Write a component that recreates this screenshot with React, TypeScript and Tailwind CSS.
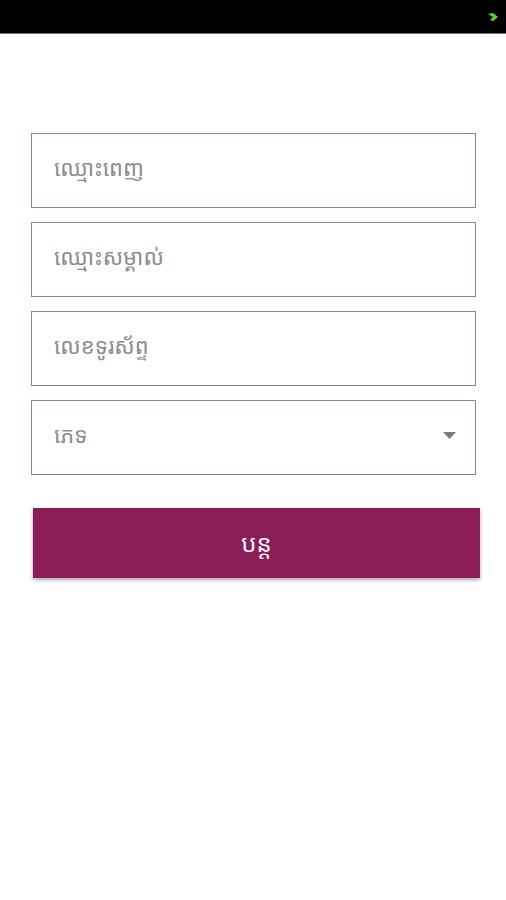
import React from 'react';

const fields = ['ឈ្មោះពេញ', 'ឈ្មោះសម្គាល់', 'លេខទូរស័ព្ទ'];

function Field({ label, select }: { label: string; select?: boolean }) {
  return (
    <div className="h-[75px] border border-[#a87a8e] border-b-[#8e7f86] bg-white flex items-center pl-[22px] pr-[19px] pb-[6px]">
      <span className="flex-1 text-[22px] text-[#8c8c8c]">{label}</span>
      {select && (
        <svg width="13" height="7" viewBox="0 0 13 7" className="mt-[2px]">
          <path d="M0 0 H13 L6.5 7 Z" fill="#7a7a7a" />
        </svg>
      )}
    </div>
  );
}

export default function App() {
  return (
    <div
      className="w-[506px] h-[900px] bg-white flex flex-col"
      style={{ fontFamily: '"Noto Sans Khmer", "Khmer OS", "Noto Sans", "DejaVu Sans", sans-serif' }}
    >
      {/* status bar */}
      <div className="h-[34px] bg-black flex items-center justify-end pr-[8px] border-b border-[#777]">
        <svg width="10" height="8" viewBox="0 0 10 8">
          <path d="M0 1 L5 0 L10 4 L5 8 L2 7 L5 4 Z" fill="#5fd12c" />
        </svg>
      </div>

      <div className="flex flex-col gap-[14px] pl-[31px] pr-[30px] pt-[99px]">
        {fields.map((f) => (
          <Field key={f} label={f} />
        ))}
        <Field label="ភេទ" select />
      </div>

      <div className="pl-[33px] pr-[26px] pt-[33px]">
        <button className="w-full h-[70px] bg-[#8c1c55] text-white text-[24px] shadow-[0_2px_4px_rgba(0,0,0,0.35)] flex items-center justify-center">
          បន្ត
        </button>
      </div>
    </div>
  );
}
